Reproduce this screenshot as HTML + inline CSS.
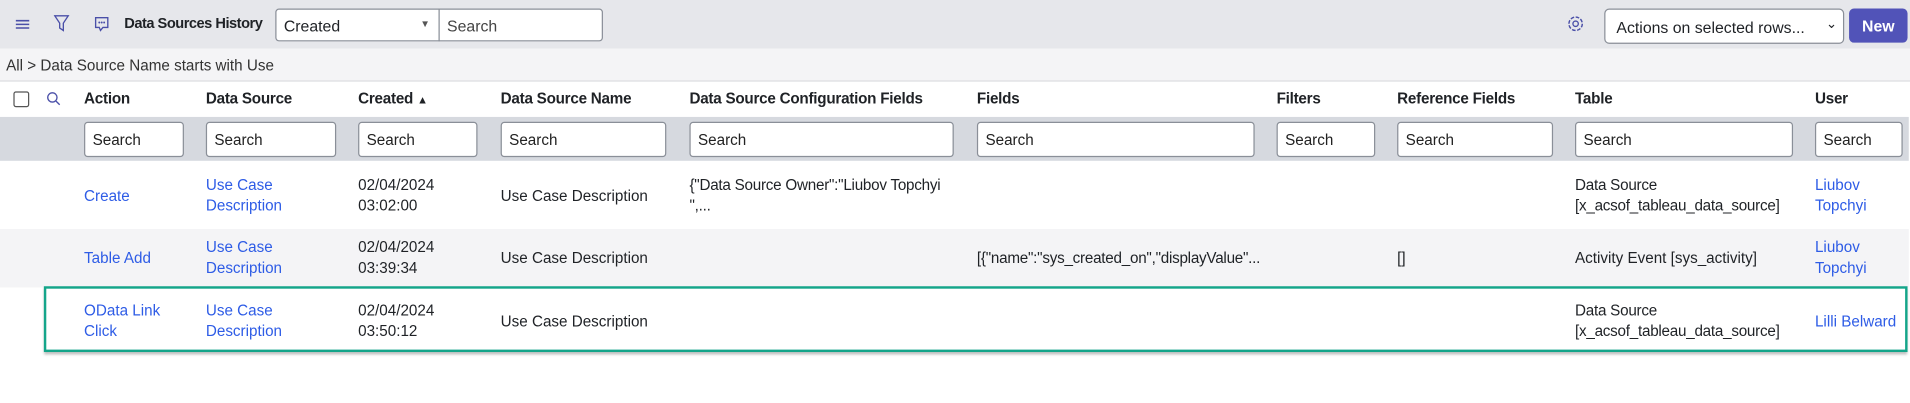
<!DOCTYPE html>
<html><head><meta charset="utf-8"><style>
*{box-sizing:border-box;margin:0;padding:0}
html,body{width:1910px;height:403px;overflow:hidden;background:#fff}
#w{position:absolute;left:0;top:0;width:1568px;height:331px;transform:scale(1.2181);transform-origin:0 0;font-family:"Liberation Sans",sans-serif;font-size:12.5px;color:#1f2226}
.a{position:absolute}
.lk{color:#2e5ce6}
.inp{position:absolute;top:100px;height:29px;border:1px solid #8a8f98;border-radius:3px;background:#fff;padding:7px 0 0 6px;font-size:12.5px;color:#222}
.h{position:absolute;top:74px;font-weight:bold;font-size:12.5px;letter-spacing:-0.2px}
.c{position:absolute;line-height:17px}
</style></head><body><div id="w">
<div class="a" style="left:0;top:0;width:1568px;height:40px;background:#e6e7eb"></div>
<div class="a" style="left:0;top:40px;width:1568px;height:27px;background:#f4f4f6;border-bottom:1px solid #dcdde0"></div>
<div class="a" style="left:0;top:96px;width:1567px;height:36px;background:#d6d9df"></div>
<div class="a" style="left:0;top:188px;width:1567px;height:48px;background:#f4f4f6"></div>
<div class="a" style="left:36px;top:235px;width:1530px;height:54px;border:2px solid #14a58a;box-shadow:0 2px 2px rgba(0,0,0,.25)"></div>

<svg class="a" style="left:12px;top:14px" width="14" height="12"><path d="M1 3h11M1 6h11M1 9h11" stroke="#4a4fa8" stroke-width="1.3"/></svg>
<svg class="a" style="left:44px;top:12px" width="14" height="15"><path d="M1 1h11L8 7v6L5 11V7z" fill="none" stroke="#4a4fa8" stroke-width="1.1"/></svg>
<svg class="a" style="left:77px;top:13px" width="14" height="14"><path d="M1.5 1.5h10v8h-4l-2 2.5-1-2.5h-3z" fill="none" stroke="#4a4fa8" stroke-width="1.1"/><circle cx="4.5" cy="5.5" r=".8" fill="#4a4fa8"/><circle cx="6.5" cy="5.5" r=".8" fill="#4a4fa8"/><circle cx="8.5" cy="5.5" r=".8" fill="#4a4fa8"/></svg>
<div class="a" style="left:102px;top:12px;font-weight:bold;font-size:12px;letter-spacing:-0.4px">Data Sources History</div>
<div class="a" style="left:226px;top:7px;width:135px;height:27px;border:1px solid #8a8f98;border-radius:3px 0 0 3px;background:#fff;padding:6px 0 0 6px;font-size:13px">Created<span class="a" style="left:118px;top:7px;font-size:8px;color:#555">▼</span></div>
<div class="a" style="left:360px;top:7px;width:135px;height:27px;border:1px solid #8a8f98;border-radius:0 3px 3px 0;background:#fff;padding:6px 0 0 6px;font-size:13px;color:#444">Search</div>
<svg class="a" style="left:1286px;top:12px" width="15" height="15"><circle cx="7.5" cy="7.5" r="5.5" fill="none" stroke="#4a4fa8" stroke-width="1.2" stroke-dasharray="3 1.3"/><circle cx="7.5" cy="7.5" r="2.2" fill="none" stroke="#4a4fa8" stroke-width="1.1"/></svg>
<div class="a" style="left:1317px;top:7px;width:197px;height:29px;border:1px solid #8a8f98;border-radius:4px;background:#fff;padding:7px 0 0 9px;font-size:13px">Actions on selected rows...<span class="a" style="left:181px;top:5px;font-size:11px">⌄</span></div>
<div class="a" style="left:1518px;top:7px;width:48px;height:28px;background:#5153b8;border-radius:4px;color:#fff;font-weight:bold;font-size:13px;text-align:center;padding-top:7px">New</div>

<div class="a" style="left:5px;top:47px;font-size:12.5px;color:#333">All &gt; Data Source Name starts with Use</div>

<div class="a" style="left:11px;top:75px;width:13px;height:13px;border:1px solid #555;border-radius:2px;background:#fff"></div>
<svg class="a" style="left:38px;top:75px" width="12" height="12"><circle cx="5" cy="5" r="3.8" fill="none" stroke="#4a4fa8" stroke-width="1.1"/><path d="M8 8l3 3" stroke="#4a4fa8" stroke-width="1.1"/></svg>
<div class="h" style="left:69px">Action</div>
<div class="h" style="left:169px">Data Source</div>
<div class="h" style="left:294px">Created <span style="font-size:9px">▲</span></div>
<div class="h" style="left:411px">Data Source Name</div>
<div class="h" style="left:566px">Data Source Configuration Fields</div>
<div class="h" style="left:802px">Fields</div>
<div class="h" style="left:1048px">Filters</div>
<div class="h" style="left:1147px">Reference Fields</div>
<div class="h" style="left:1293px">Table</div>
<div class="h" style="left:1490px">User</div>

<div class="inp" style="left:69px;width:82px">Search</div>
<div class="inp" style="left:169px;width:107px">Search</div>
<div class="inp" style="left:294px;width:98px">Search</div>
<div class="inp" style="left:411px;width:136px">Search</div>
<div class="inp" style="left:566px;width:217px">Search</div>
<div class="inp" style="left:802px;width:228px">Search</div>
<div class="inp" style="left:1048px;width:81px">Search</div>
<div class="inp" style="left:1147px;width:128px">Search</div>
<div class="inp" style="left:1293px;width:179px">Search</div>
<div class="inp" style="left:1490px;width:72px">Search</div>

<div class="c lk" style="left:69px;top:153px">Create</div>
<div class="c lk" style="left:169px;top:144px">Use Case<br>Description</div>
<div class="c" style="left:294px;top:144px">02/04/2024<br>03:02:00</div>
<div class="c" style="left:411px;top:153px">Use Case Description</div>
<div class="c" style="left:566px;top:144px;letter-spacing:-0.2px">{"Data Source Owner":"Liubov Topchyi<br>",...</div>
<div class="c" style="left:1293px;top:144px;letter-spacing:-0.2px">Data Source<br>[x_acsof_tableau_data_source]</div>
<div class="c lk" style="left:1490px;top:144px">Liubov<br>Topchyi</div>

<div class="c lk" style="left:69px;top:204px">Table Add</div>
<div class="c lk" style="left:169px;top:195px">Use Case<br>Description</div>
<div class="c" style="left:294px;top:195px">02/04/2024<br>03:39:34</div>
<div class="c" style="left:411px;top:204px">Use Case Description</div>
<div class="c" style="left:802px;top:204px;letter-spacing:-0.2px">[{"name":"sys_created_on","displayValue"...</div>
<div class="c" style="left:1147px;top:204px">[]</div>
<div class="c" style="left:1293px;top:204px">Activity Event [sys_activity]</div>
<div class="c lk" style="left:1490px;top:195px">Liubov<br>Topchyi</div>

<div class="c lk" style="left:69px;top:247px">OData Link<br>Click</div>
<div class="c lk" style="left:169px;top:247px">Use Case<br>Description</div>
<div class="c" style="left:294px;top:247px">02/04/2024<br>03:50:12</div>
<div class="c" style="left:411px;top:256px">Use Case Description</div>
<div class="c" style="left:1293px;top:247px;letter-spacing:-0.2px">Data Source<br>[x_acsof_tableau_data_source]</div>
<div class="c lk" style="left:1490px;top:256px">Lilli Belward</div>
</div></body></html>
